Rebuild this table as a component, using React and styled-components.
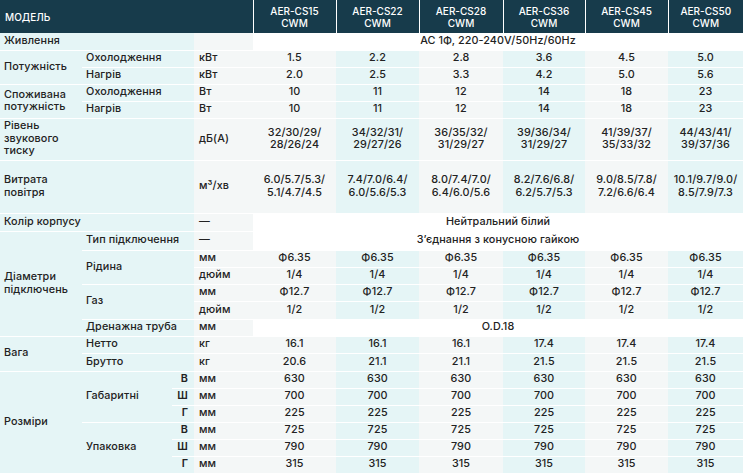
import React from 'react';
import styled, { createGlobalStyle } from 'styled-components';

const GlobalStyle = createGlobalStyle`
  html, body {
    margin: 0;
    padding: 0;
    background: #ffffff;
  }
`;

const CYAN = '#e5f5f6';
const GRAY = '#f4f7f7';

const Table = styled.table`
  width: 743px;
  border-collapse: collapse;
  table-layout: fixed;
  font-family: Inter, 'Open Sans', sans-serif;
  font-size: 10.8px;
  font-weight: 500;
  color: #222;
  letter-spacing: 0.1px;
`;

const HeadRow = styled.tr`
  height: 33px;
  background: #173b4b;
`;

const HeadCell = styled.th`
  color: #fff;
  font-weight: 500;
  font-size: 10px;
  line-height: 12px;
  letter-spacing: 0;
  padding: 0;
  text-align: ${p => (p.$left ? 'left' : 'center')};
  padding-left: ${p => (p.$left ? '5px' : '0')};
  border-left: ${p => (p.$left ? 'none' : '1px solid #fff')};
`;

const Row = styled.tr`
  height: ${p => p.$h || 17}px;
`;

const Cell = styled.td`
  padding: 0 0 0 ${p => p.$pl ?? 0}px;
  background: ${p => p.$bg || '#fff'};
  text-align: ${p => p.$align || 'left'};
  border-bottom: 1px solid #fff;
  line-height: 12.5px;
  vertical-align: middle;
  white-space: nowrap;
`;

const Letter = styled(Cell)`
  font-weight: 600;
  text-align: right;
  padding-right: 6px;
`;

const models = ['AER-CS15', 'AER-CS22', 'AER-CS28', 'AER-CS36', 'AER-CS45', 'AER-CS50'];

const Param = ({ children, rows, cols }) => (
  <Cell $bg={CYAN} $pl={4} rowSpan={rows} colSpan={cols}>{children}</Cell>
);
const Sub = ({ children, rows, cols = 2 }) => (
  <Cell $bg={CYAN} $pl={4} rowSpan={rows} colSpan={cols}>{children}</Cell>
);
const Unit = ({ children }) => <Cell $bg={GRAY} $pl={5}>{children}</Cell>;

const Data = ({ values }) =>
  values.map((v, i) => (
    <Cell key={i} $bg={i % 2 ? CYAN : GRAY} $align="center">{v}</Cell>
  ));

const Wide = ({ children }) => (
  <Cell colSpan={6} $align="center">{children}</Cell>
);

const two = (a, b) => (
  <>
    {a}
    <br />
    {b}
  </>
);

export default function App() {
  return (
    <>
      <GlobalStyle />
      <Table>
        <colgroup>
          <col style={{ width: 82 }} />
          <col style={{ width: 90 }} />
          <col style={{ width: 22 }} />
          <col style={{ width: 59 }} />
          <col style={{ width: 83 }} />
          <col style={{ width: 83 }} />
          <col style={{ width: 84 }} />
          <col style={{ width: 82 }} />
          <col style={{ width: 83 }} />
          <col style={{ width: 75 }} />
        </colgroup>
        <thead>
          <HeadRow>
            <HeadCell colSpan={4} $left>МОДЕЛЬ</HeadCell>
            {models.map(m => (
              <HeadCell key={m}>{two(m, 'CWM')}</HeadCell>
            ))}
          </HeadRow>
        </thead>
        <tbody>
          <Row>
            <Param>Живлення</Param>
            <Sub cols={2} />
            <Unit />
            <Wide>AC 1Ф, 220-240V/50Hz/60Hz</Wide>
          </Row>
          <Row>
            <Param rows={2}>Потужність</Param>
            <Sub>Охолодження</Sub>
            <Unit>кВт</Unit>
            <Data values={['1.5', '2.2', '2.8', '3.6', '4.5', '5.0']} />
          </Row>
          <Row>
            <Sub>Нагрів</Sub>
            <Unit>кВт</Unit>
            <Data values={['2.0', '2.5', '3.3', '4.2', '5.0', '5.6']} />
          </Row>
          <Row>
            <Param rows={2}>{two('Споживана', 'потужність')}</Param>
            <Sub>Охолодження</Sub>
            <Unit>Вт</Unit>
            <Data values={['10', '11', '12', '14', '18', '23']} />
          </Row>
          <Row>
            <Sub>Нагрів</Sub>
            <Unit>Вт</Unit>
            <Data values={['10', '11', '12', '14', '18', '23']} />
          </Row>
          <Row $h={42}>
            <Param>
              Рівень
              <br />
              звукового
              <br />
              тиску
            </Param>
            <Sub />
            <Unit>дБ(А)</Unit>
            <Data
              values={[
                two('32/30/29/', '28/26/24'),
                two('34/32/31/', '29/27/26'),
                two('36/35/32/', '31/29/27'),
                two('39/36/34/', '31/29/27'),
                two('41/39/37/', '35/33/32'),
                two('44/43/41/', '39/37/36'),
              ]}
            />
          </Row>
          <Row $h={53}>
            <Param>{two('Витрата', 'повітря')}</Param>
            <Sub />
            <Unit>м³/хв</Unit>
            <Data
              values={[
                two('6.0/5.7/5.3/', '5.1/4.7/4.5'),
                two('7.4/7.0/6.4/', '6.0/5.6/5.3'),
                two('8.0/7.4/7.0/', '6.4/6.0/5.6'),
                two('8.2/7.6/6.8/', '6.2/5.7/5.3'),
                two('9.0/8.5/7.8/', '7.2/6.6/6.4'),
                two('10.1/9.7/9.0/', '8.5/7.9/7.3'),
              ]}
            />
          </Row>
          <Row $h={18}>
            <Param cols={3}>Колір корпусу</Param>
            <Unit>—</Unit>
            <Wide>Нейтральний білий</Wide>
          </Row>
          <Row $h={19}>
            <Param rows={6}>{two('Діаметри', 'підключень')}</Param>
            <Sub>Тип підключення</Sub>
            <Unit>—</Unit>
            <Wide>З’єднання з конусною гайкою</Wide>
          </Row>
          <Row>
            <Sub rows={2}>Рідина</Sub>
            <Unit>мм</Unit>
            <Data values={Array(6).fill('Ф6.35')} />
          </Row>
          <Row>
            <Unit>дюйм</Unit>
            <Data values={Array(6).fill('1/4')} />
          </Row>
          <Row>
            <Sub rows={2}>Газ</Sub>
            <Unit>мм</Unit>
            <Data values={Array(6).fill('Ф12.7')} />
          </Row>
          <Row $h={18}>
            <Unit>дюйм</Unit>
            <Data values={Array(6).fill('1/2')} />
          </Row>
          <Row>
            <Sub>Дренажна труба</Sub>
            <Unit>мм</Unit>
            <Wide>O.D.18</Wide>
          </Row>
          <Row>
            <Param rows={2}>Вага</Param>
            <Sub>Нетто</Sub>
            <Unit>кг</Unit>
            <Data values={['16.1', '16.1', '16.1', '17.4', '17.4', '17.4']} />
          </Row>
          <Row $h={18}>
            <Sub>Брутто</Sub>
            <Unit>кг</Unit>
            <Data values={['20.6', '21.1', '21.1', '21.5', '21.5', '21.5']} />
          </Row>
          {[
            ['Габаритні', [['В', '630'], ['Ш', '700'], ['Г', '225']]],
            ['Упаковка', [['В', '725'], ['Ш', '790'], ['Г', '315']]],
          ].map(([name, dims], gi) =>
            dims.map(([l, v], i) => (
              <Row key={name + l}>
                {gi === 0 && i === 0 && <Param rows={6}>Розміри</Param>}
                {i === 0 && <Sub rows={3} cols={1}>{name}</Sub>}
                <Letter $bg={CYAN}>{l}</Letter>
                <Unit>мм</Unit>
                <Data values={Array(6).fill(v)} />
              </Row>
            ))
          )}
        </tbody>
      </Table>
    </>
  );
}
